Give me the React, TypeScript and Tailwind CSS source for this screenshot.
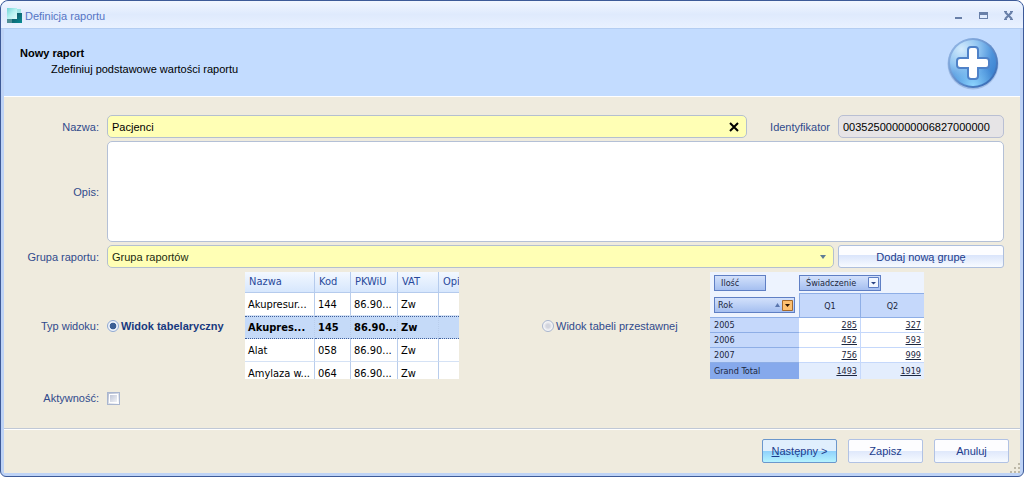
import type { ReactNode } from "react";

interface ServiceRow {
  name: string;
  code: string;
  pkwiu: string;
  vat: string;
  selected?: boolean;
}

const SERVICE_ROWS: ServiceRow[] = [
  { name: "Akupresur...", code: "144", pkwiu: "86.90...", vat: "Zw" },
  { name: "Akupres...", code: "145", pkwiu: "86.90...", vat: "Zw", selected: true },
  { name: "Alat", code: "058", pkwiu: "86.90...", vat: "Zw" },
  { name: "Amylaza w...", code: "064", pkwiu: "86.90...", vat: "Zw" },
];

const PIVOT_ROWS = [
  { year: "2005", q1: "285", q2: "327" },
  { year: "2006", q1: "452", q2: "593" },
  { year: "2007", q1: "756", q2: "999" },
];

const RADIO_CLASS =
  "size-3 shrink-0 appearance-none rounded-full border border-[#a9b6cf] bg-[radial-gradient(circle,#d3d5de_0_25%,#f4f4f6_60%)] checked:border-[#8fa9d4] checked:bg-[radial-gradient(circle,#3c5f94_0_42%,#eef3fb_52%)]";

const PIVOT_BUTTON_CLASS =
  "flex h-4 items-center border border-[#5f7fc4] bg-linear-to-b from-[#d3e1fb] to-[#a5bff0] px-1.5";

/** Small teal window logo in the title bar. */
function AppLogo() {
  return (
    <svg viewBox="0 0 16 16" className="size-4" aria-hidden="true">
      <defs>
        <linearGradient id="logo-light" x1="0" y1="0" x2="1" y2="1">
          <stop offset="0" stopColor="#6fd3d6" />
          <stop offset="0.5" stopColor="#b5f1f0" />
          <stop offset="1" stopColor="#e2fbfb" />
        </linearGradient>
        <linearGradient id="logo-dark" x1="0" y1="0" x2="1" y2="1">
          <stop offset="0" stopColor="#17505f" />
          <stop offset="1" stopColor="#068d94" />
        </linearGradient>
      </defs>
      <path d="M5 5h10v10H5z" fill="url(#logo-dark)" />
      <path d="M0 11h5v4H0z" fill="#4f8f96" />
      <path d="M0 0h10v11H0z" fill="url(#logo-light)" />
      <path d="M10 1h4v4h-4z" fill="#9fe6e6" />
    </svg>
  );
}

function AddOrb() {
  return (
    <svg viewBox="0 0 54 54" className="size-[54px]" aria-hidden="true">
      <defs>
        <radialGradient id="orb-fill" cx="0.25" cy="0.2" r="0.85">
          <stop offset="0" stopColor="#d3ebfd" />
          <stop offset="0.45" stopColor="#8fc4f1" />
          <stop offset="0.8" stopColor="#4c92db" />
          <stop offset="1" stopColor="#3f86d2" />
        </radialGradient>
        <linearGradient id="orb-rim" x1="0" y1="0" x2="1" y2="1">
          <stop offset="0" stopColor="#9dbfea" />
          <stop offset="1" stopColor="#2c62b0" />
        </linearGradient>
        <radialGradient id="orb-glow" cx="0.5" cy="1" r="0.5">
          <stop offset="0" stopColor="#8fd6ff" />
          <stop offset="1" stopColor="#8fd6ff" stopOpacity="0" />
        </radialGradient>
      </defs>
      <circle cx="27" cy="28" r="25.5" fill="#7d9cc9" opacity="0.5" />
      <circle cx="27" cy="27" r="25" fill="url(#orb-rim)" />
      <circle cx="27" cy="27" r="23" fill="url(#orb-fill)" />
      <circle cx="27" cy="27" r="23" fill="url(#orb-glow)" />
      <path
        d="M25 11h4q3 0 3 3v8h8q3 0 3 3v4q0 3-3 3h-8v8q0 3-3 3h-4q-3 0-3-3v-8h-8q-3 0-3-3v-4q0-3 3-3h8v-8q0-3 3-3z"
        fill="#fff"
        stroke="#4f82c8"
        strokeWidth="2"
      />
    </svg>
  );
}

function TitleBar() {
  return (
    <div className="flex h-7 items-center gap-0.5 border-b border-[#b3cdf2] bg-linear-to-b from-[#f1f6ff] via-[#dfeafd] to-[#e9f1ff] pt-0.5 pr-1 pl-1.5">
      <AppLogo />
      <h1 className="grow text-[#5675c4]">Definicja raportu</h1>
      <div className="flex items-center gap-1">
        <button type="button" aria-label="Minimalizuj" className="flex h-5 w-[21px] items-center justify-center">
          <svg viewBox="0 0 9 9" className="size-[9px]">
            <path d="M1 6h7v2H1z" fill="#687fa8" />
          </svg>
        </button>
        <button type="button" aria-label="Maksymalizuj" className="flex h-5 w-[21px] items-center justify-center">
          <svg viewBox="0 0 9 9" className="size-[9px]">
            <path d="M0 1h9v7H0zM1 4v3h7V4z" fill="#687fa8" fillRule="evenodd" />
          </svg>
        </button>
        <button type="button" aria-label="Zamknij" className="flex h-5 w-[21px] items-center justify-center">
          <svg viewBox="0 0 9 9" className="size-[9px]">
            <path d="M1 1l7 7M8 1L1 8" stroke="#687fa8" strokeWidth="2" />
            <path d="M0 .5h3M6 .5h3M0 8.500h3M6 8.500h3" stroke="#687fa8" />
          </svg>
        </button>
      </div>
    </div>
  );
}

function TablePreview() {
  return (
    <div className="h-[107px] w-[214px] shrink-0 overflow-hidden bg-white font-['DejaVu_Sans_Condensed','DejaVu_Sans',sans-serif] text-[11px] text-black">
      <table className="w-full table-fixed border-separate border-spacing-0 whitespace-nowrap">
        <colgroup>
          <col className="w-[70px]" />
          <col className="w-9" />
          <col className="w-[47px]" />
          <col className="w-[41px]" />
          <col />
        </colgroup>
        <thead>
          <tr className="h-[21px] bg-linear-to-b from-[#f3f8ff] to-[#d5e6fd] text-left text-[#28489b]">
            {["Nazwa", "Kod", "PKWiU", "VAT", "Opi"].map((title) => (
              <th
                key={title}
                className="overflow-hidden border-r border-b border-[#b5cbed] p-0 pl-1 font-normal last:border-r-0"
              >
                {title}
              </th>
            ))}
          </tr>
        </thead>
        <tbody>
          {SERVICE_ROWS.map((row) => (
            <tr
              key={row.code}
              className={
                row.selected
                  ? "h-[23px] bg-[#c5daf8] font-bold *:border-y *:border-y-[#40609c] *:border-dotted"
                  : "h-[23px] *:border-b *:border-b-[#d5e2f5]"
              }
            >
              <td className="overflow-hidden border-r border-r-[#b9cdec] p-0 pt-px pl-[3px]">{row.name}</td>
              <td className="overflow-hidden border-r border-r-[#b9cdec] p-0 pt-px pl-[3px]">{row.code}</td>
              <td className="overflow-hidden border-r border-r-[#b9cdec] p-0 pt-px pl-[3px]">{row.pkwiu}</td>
              <td className="overflow-hidden border-r border-r-[#b9cdec] p-0 pt-px pl-[3px]">{row.vat}</td>
              <td className="p-0" />
            </tr>
          ))}
        </tbody>
      </table>
    </div>
  );
}

function PivotPreview() {
  return (
    <div className="h-[107px] w-[214px] shrink-0 overflow-hidden bg-[#edf3fe] font-['DejaVu_Sans_Condensed','DejaVu_Sans',sans-serif] text-[9px] leading-3 text-[#1c2740]">
      <div className="flex h-[21px] items-center pl-1">
        <div className="w-[85px]">
          <span className={`${PIVOT_BUTTON_CLASS} w-[52px]`}>Ilość</span>
        </div>
        <span className={`${PIVOT_BUTTON_CLASS} w-[82px] justify-between pr-px`}>
          Świadczenie
          <svg viewBox="0 0 11 11" className="size-[11px]">
            <path d="M.5.5h10v10H.5z" fill="#f2f7ff" stroke="#5f7fc4" />
            <path d="M3 5h5L5.500 7.500z" fill="#2a4484" />
          </svg>
        </span>
      </div>
      <table className="w-full table-fixed border-separate border-spacing-0">
        <colgroup>
          <col className="w-[89px]" />
          <col className="w-[62px]" />
          <col />
        </colgroup>
        <thead>
          <tr className="h-[25px]">
            <th className="border-b border-[#8eaee6] p-0 pl-1 font-normal">
              <span className={`${PIVOT_BUTTON_CLASS} mr-1 pr-px pl-[3px]`}>
                <span className="grow text-left">Rok</span>
                <svg viewBox="0 0 18 12" className="h-3 w-[18px]">
                  <path d="M0 8l2.500-4L5 8z" fill="#5a76ae" />
                  <path d="M7.500 1.500h10v10h-10z" fill="#fdc070" stroke="#a56a2c" />
                  <path d="M10 5h5l-2.500 3z" fill="#2b1400" />
                </svg>
              </span>
            </th>
            <th className="border border-[#8eaee6] bg-[#c5d8fb] p-0 font-normal">Q1</th>
            <th className="border-y border-[#8eaee6] bg-[#c5d8fb] p-0 font-normal">Q2</th>
          </tr>
        </thead>
        <tbody>
          {PIVOT_ROWS.map((row) => (
            <tr key={row.year} className="h-[15px] bg-white text-right">
              <th className="border-b border-[#8eaee6] bg-[#c5d8fb] p-0 pl-1 text-left font-normal">{row.year}</th>
              <td className="border-r border-b border-[#c5d8fb] p-0 pr-[3px] underline">{row.q1}</td>
              <td className="border-b border-[#c5d8fb] p-0 pr-[3px] underline">{row.q2}</td>
            </tr>
          ))}
        </tbody>
        <tfoot>
          <tr className="h-4 bg-[#e3edfd] text-right">
            <th className="bg-[#86a9ec] p-0 pl-1 text-left font-normal">Grand Total</th>
            <td className="border-r border-[#c5d8fb] p-0 pr-[3px] underline">1493</td>
            <td className="p-0 pr-[3px] underline">1919</td>
          </tr>
        </tfoot>
      </table>
    </div>
  );
}

function FieldLabel({ htmlFor, children }: { htmlFor: string; children: ReactNode }) {
  return (
    <label htmlFor={htmlFor} className="w-[95px] shrink-0 text-right">
      {children}
    </label>
  );
}

function FooterButton({ primary, children }: { primary?: boolean; children: ReactNode }) {
  return (
    <button
      type="button"
      className={
        primary
          ? "h-6 w-[75px] rounded-xs border border-[#6b97cc] bg-linear-to-b from-[#e0effd] from-50% via-[#8fd0fb] via-50% to-[#b5f3ff] text-[#1c3c8c]"
          : "h-6 w-[75px] rounded-xs border border-[#b1c2e4] bg-linear-to-b from-[#fdfdff] from-50% via-[#dfe8fb] via-50% to-[#f6faff] text-[#1c3c8c]"
      }
    >
      {children}
    </button>
  );
}

export default function App() {
  return (
    <form className="rounded-t-lg rounded-b-md border border-[#3d5a98] bg-[#bed3f6] font-['Liberation_Sans',Arial,sans-serif] text-[11px] leading-4 text-[#2f4a8c]">
      <div className="overflow-hidden rounded-t-lg">
        <TitleBar />
      </div>

      <div className="mx-[3px] mb-[3px] bg-[#efebde]">
        <header className="flex h-[68px] items-center justify-between border-b border-white bg-[#c3dcff] pr-5 pl-4 text-black">
          <div className="pb-1">
            <h2 className="font-bold">Nowy raport</h2>
            <p className="pl-[31px]">Zdefiniuj podstawowe wartości raportu</p>
          </div>
          <AddOrb />
        </header>

        <div className="flex flex-col gap-[3px] border-b border-[#c0c8d6] pt-[18px] pr-4 pb-[22px]">
          <div className="flex items-center gap-2">
            <FieldLabel htmlFor="name">Nazwa:</FieldLabel>
            <div className="flex h-[23px] grow items-center rounded-[5px] border border-[#b4c0d0] bg-[#ffffb5] pr-1.5 pl-1">
              <input
                id="name"
                type="text"
                defaultValue="Pacjenci"
                className="min-w-0 grow text-black outline-none"
              />
              <button type="button" aria-label="Wyczyść" className="flex size-3 items-center justify-center">
                <svg viewBox="0 0 10 10" className="size-2.5">
                  <path d="M1 1l8 8M9 1L1 9" stroke="#000" strokeWidth="2" />
                </svg>
              </button>
            </div>
            <label htmlFor="identifier" className="w-[75px] shrink-0 text-right">
              Identyfikator
            </label>
            <input
              id="identifier"
              type="text"
              readOnly
              value="003525000000006827000000"
              className="h-[23px] w-[166px] rounded-[5px] border border-[#b9bfd3] bg-[#e6e4e6] px-1 text-black outline-none"
            />
          </div>

          <div className="flex items-center gap-2">
            <FieldLabel htmlFor="description">Opis:</FieldLabel>
            <textarea
              id="description"
              className="h-[101px] grow resize-none rounded-[5px] border border-[#b4c0d6] bg-white px-1 text-black outline-none"
            />
          </div>

          <div className="flex items-center gap-2">
            <FieldLabel htmlFor="group">Grupa raportu:</FieldLabel>
            <div className="flex grow gap-1">
              <div className="relative grow">
                <select
                  id="group"
                  className="h-[23px] w-full appearance-none rounded-[5px] border border-[#b4c0d0] bg-[#ffffb5] px-1 text-[#1c2b10] outline-none"
                >
                  <option>Grupa raportów</option>
                </select>
                <svg viewBox="0 0 6 4" className="pointer-events-none absolute top-2.5 right-2 h-1 w-1.5">
                  <path d="M0 0h6L3 4z" fill="#5f7c96" />
                </svg>
              </div>
              <button
                type="button"
                className="h-[23px] w-[166px] rounded-[3px] border border-[#aebfdd] bg-linear-to-b from-[#fdfdff] from-45% via-[#dbe5fb] via-45% to-[#f8fbff] text-[#1c3c8c]"
              >
                Dodaj nową grupę
              </button>
            </div>
          </div>

          <div className="flex items-center gap-2 pt-px">
            <span id="view-type" className="w-[95px] shrink-0 text-right">
              Typ widoku:
            </span>
            <div role="radiogroup" aria-labelledby="view-type" className="flex grow items-center">
              <label className="flex w-[138px] shrink-0 items-center gap-0.5 font-bold whitespace-nowrap text-[#17397f]">
                <input type="radio" name="view" defaultChecked className={RADIO_CLASS} />
                Widok tabelaryczny
              </label>
              <TablePreview />
              <label className="ml-[83px] flex w-[168px] shrink-0 items-center gap-0.5 whitespace-nowrap">
                <input type="radio" name="view" className={RADIO_CLASS} />
                Widok tabeli przestawnej
              </label>
              <PivotPreview />
            </div>
          </div>

          <div className="flex items-center gap-2 pt-2">
            <FieldLabel htmlFor="active">Aktywność:</FieldLabel>
            <input
              id="active"
              type="checkbox"
              className="size-[13px] appearance-none border border-[#a9b6cf] bg-linear-to-br from-[#b3bbd0] to-white outline-1 -outline-offset-3 outline-white checked:from-[#3c5f94]"
            />
          </div>
        </div>

        <footer className="relative flex justify-end gap-[11px] border-t border-white pt-[9px] pr-[11px] pb-2.5">
          <FooterButton primary>
            <u>N</u>astępny &gt;
          </FooterButton>
          <FooterButton>Zapisz</FooterButton>
          <FooterButton>Anuluj</FooterButton>
          <svg viewBox="0 0 10 10" className="absolute right-0 bottom-0 size-2.5">
            <path
              d="M8 0h2v2H8zM8 4h2v2H8zM4 4h2v2H4zM8 8h2v2H8zM4 8h2v2H4zM0 8h2v2H0z"
              fill="#bdb8a8"
            />
          </svg>
        </footer>
      </div>
    </form>
  );
}
